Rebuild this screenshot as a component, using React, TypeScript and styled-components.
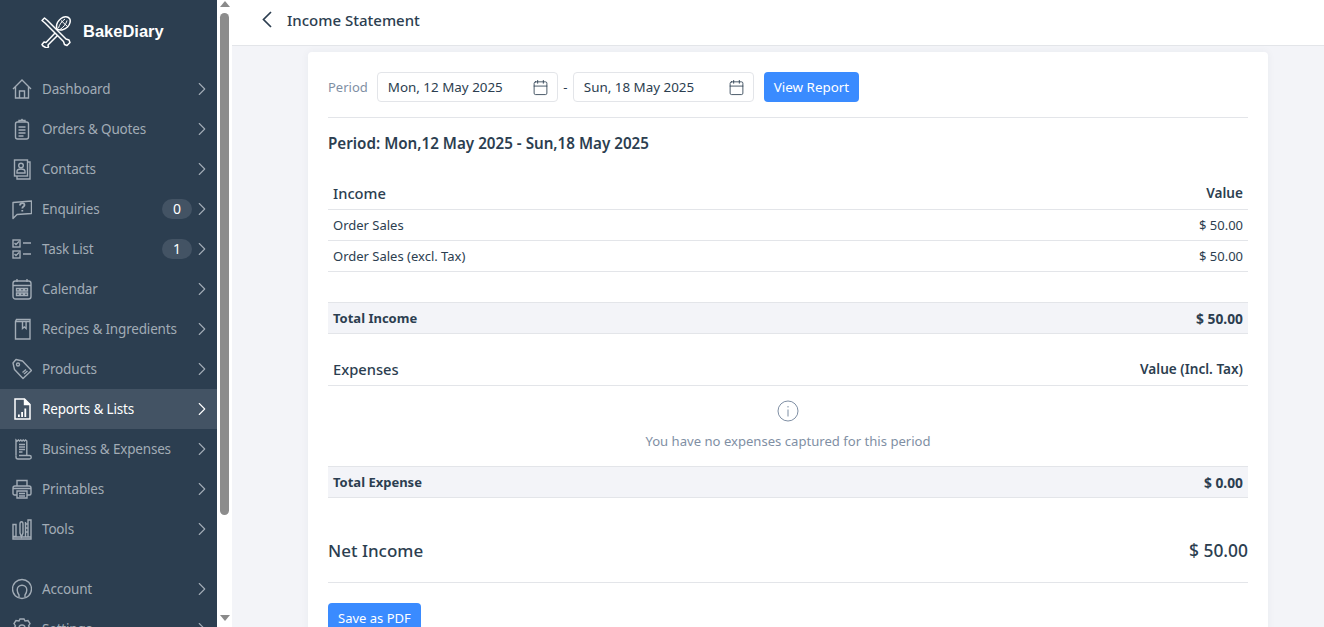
import React from 'react';
import styled, { createGlobalStyle } from 'styled-components';
import { ChevronRight, Calendar } from 'lucide-react';

const GlobalStyle = createGlobalStyle`
  html, body { margin: 0; padding: 0; height: 100%; overflow: hidden; }
  body { font-family: "Noto Sans", "Open Sans", sans-serif; color: #2c3e50; background: #f3f4f8; }
  * { box-sizing: border-box; }
`;

const Shell = styled.div`
  display: flex;
  width: 1324px;
  height: 627px;
  overflow: hidden;
`;

const Sidebar = styled.aside`
  width: 217px;
  height: 627px;
  flex: none;
  background: #2c3e50;
  overflow: hidden;
`;

const Brand = styled.div`
  height: 69px;
  display: flex;
  align-items: flex-start;
  padding: 16px 0 0 40px;
  gap: 11px;
`;

const BrandName = styled.span`
  font-family: "Liberation Sans", Arial, sans-serif;
  font-weight: 700;
  font-size: 16.5px;
  line-height: 31px;
  color: #fff;
`;

const NavList = styled.nav`
  display: flex;
  flex-direction: column;
`;

const NavItem = styled.div<{ $active?: boolean; $spaced?: boolean }>`
  height: 40px;
  flex: none;
  display: flex;
  align-items: center;
  padding: 0 4px 0 12px;
  margin-top: ${({ $spaced }) => ($spaced ? '20px' : '0')};
  background: ${({ $active }) => ($active ? '#435364' : 'transparent')};
  color: ${({ $active }) => ($active ? '#ffffff' : '#a2acb6')};
  font-size: 13.5px;
  letter-spacing: -0.18px;
`;

const NavIcon = styled.svg`
  width: 20px;
  height: 22px;
  flex: none;
  margin-right: 10px;
  fill: none;
  stroke: currentColor;
  stroke-width: 1.4;
`;

const NavLabel = styled.span`
  flex: 1;
  white-space: nowrap;
  padding-bottom: 1px;
`;

const Count = styled.span`
  width: 30px;
  height: 20px;
  border-radius: 10px;
  background: #435364;
  color: #fff;
  font-size: 14px;
  line-height: 20px;
  text-align: center;
  margin-right: -1px;
`;

const Scrollbar = styled.div`
  width: 15px;
  height: 627px;
  flex: none;
  background: #fff;
  display: flex;
  flex-direction: column;
  align-items: center;
`;

const ArrowUp = styled.div`
  flex: none;
  margin-top: 1px;
  width: 0;
  height: 0;
  border-left: 5px solid transparent;
  border-right: 5px solid transparent;
  border-bottom: 6px solid #8a8a8a;
`;

const ArrowDown = styled(ArrowUp)`
  margin-top: 100px;
  border-bottom: 0;
  border-top: 6px solid #8a8a8a;
`;

const Thumb = styled.div`
  flex: none;
  width: 9px;
  height: 502px;
  margin-top: 6px;
  border-radius: 5px;
  background: #8c8c8c;
`;

const Main = styled.main`
  flex: 1;
  min-width: 0;
  height: 627px;
  overflow: hidden;
`;

const TopBar = styled.header`
  height: 46px;
  background: #fff;
  border-bottom: 1px solid #e3e5e9;
  display: flex;
  align-items: center;
  padding: 0 0 6px 29px;
  gap: 14px;
  font-size: 15px;
  font-weight: 500;
  color: #2c3e50;
`;

const Card = styled.section`
  width: 960px;
  margin: 6px 0 0 76px;
  padding: 20px;
  background: #fff;
  border-radius: 4px 4px 0 0;
  box-shadow: 0 0 8px rgba(44, 62, 80, 0.05);
`;

const FilterRow = styled.div`
  display: flex;
  align-items: center;
  height: 30px;
  padding-bottom: 15px;
  border-bottom: 1px solid #e3e5e9;
  box-sizing: content-box;
`;

const PeriodLabel = styled.span`
  font-size: 13px;
  color: #7f8fa4;
  margin-right: 9px;
`;

const DateField = styled.div`
  width: 181px;
  height: 30px;
  border: 1px solid #e3e5e9;
  border-radius: 4px;
  display: flex;
  align-items: center;
  justify-content: space-between;
  padding: 0 8px 0 10px;
  font-size: 13.4px;
  color: #2c3e50;
`;

const DateDash = styled.span`
  width: 15px;
  text-align: center;
  font-size: 13px;
  color: #2c3e50;
`;

const PrimaryButton = styled.button`
  height: 30px;
  padding: 0 10px;
  border: 0;
  border-radius: 4px;
  background: #3a8bff;
  color: #fff;
  font-family: inherit;
  font-size: 13.4px;
`;

const ViewButton = styled(PrimaryButton)`
  margin-left: 10px;
`;

const PeriodHeading = styled.h2`
  margin: 15px 0 0;
  font-size: 15.2px;
  line-height: 20px;
  font-weight: 600;
  color: #2c3e50;
`;

const HeadRow = styled.div<{ $top: number }>`
  display: flex;
  justify-content: space-between;
  align-items: center;
  height: 32px;
  margin-top: ${({ $top }) => $top}px;
  padding: 0 5px 2px;
  border-bottom: 1px solid #e3e5e9;
`;

const HeadTitle = styled.span`
  font-size: 14.7px;
  font-weight: 500;
`;

const HeadValue = styled.span`
  font-size: 13.6px;
  font-weight: 600;
`;

const DataRow = styled.div`
  display: flex;
  justify-content: space-between;
  align-items: center;
  height: 31px;
  padding: 0 5px;
  border-bottom: 1px solid #e3e5e9;
  font-size: 13px;
`;

const TotalRow = styled.div<{ $top: number }>`
  display: flex;
  justify-content: space-between;
  align-items: center;
  height: 32px;
  margin-top: ${({ $top }) => $top}px;
  padding: 0 5px;
  background: #f3f4f8;
  border-top: 1px solid #e3e5e9;
  border-bottom: 1px solid #e3e5e9;
  font-size: 13px;
  font-weight: 700;
`;

const TotalAmount = styled.span`
  font-size: 13.8px;
`;

const Empty = styled.div`
  height: 80px;
  display: flex;
  flex-direction: column;
  align-items: center;
  padding-top: 14px;
  gap: 10px;
  color: #7f8fa4;
  font-size: 13.1px;
`;

const NetRow = styled.div`
  display: flex;
  justify-content: space-between;
  align-items: center;
  height: 85px;
  padding-top: 20px;
  border-bottom: 1px solid #e3e5e9;
  font-size: 17px;
  font-weight: 500;
`;

const NetAmount = styled.span`
  font-size: 17.4px;
`;

const SaveButton = styled(PrimaryButton)`
  display: block;
  margin-top: 20px;
  font-size: 13px;
`;

const icons: Record<string, React.ReactNode> = {
  home: <path d="M1 11 10 2l9 9M3.5 9v11h13V9M7.5 20v-7h5v7" />,
  clipboard: (
    <>
      <rect x="3.5" y="4" width="13" height="17" rx="2" />
      <path d="M7 4V2.5h2l1-1 1 1h2V4M6.5 9h7M6.5 12h7M6.5 15h7M6.5 18h5" />
    </>
  ),
  contact: (
    <>
      <rect x="2.5" y="2" width="13" height="16" />
      <path d="M15.5 4h2.5v17H5v-3" />
      <circle cx="9" cy="7.5" r="2.3" />
      <path d="M5 15v-1.5c0-1.5 1.5-2.5 4-2.5s4 1 4 2.5V15z" />
    </>
  ),
  enquiry: (
    <>
      <path d="M1 4.5 19.5 3v12.5L5 16.5l-4 4z" strokeLinejoin="round" />
      <path d="M8 7.5c0-3 4.500-3 4.500-.5 0 1.700-2.200 1.500-2.200 3.500M10.300 12v1.500" strokeWidth="1.800" />
    </>
  ),
  tasks: (
    <>
      <rect x="1" y="2" width="7" height="7" />
      <rect x="1" y="13" width="7" height="7" />
      <path d="M2.500 5l1.500 1.500L7 3.500M2.500 16l1.500 1.500L7 14.500M11 5h8M11 16h8" />
    </>
  ),
  calendar: (
    <>
      <rect x="1" y="3" width="18" height="18" rx="2.500" />
      <path d="M1 7.500h18M5 1v3M15 1v3" />
      <path d="M4.500 10.500h3v2.500h-3zM8.500 10.500h3v2.500h-3zM12.500 10.500h3v2.500h-3zM4.500 15h3v2.500h-3zM8.500 15h3v2.500h-3zM12.500 15h3v2.500h-3z" />
    </>
  ),
  book: (
    <>
      <path d="M3.500 21V3.500L4.500 1.500H18V21zM3.500 3.500H18" />
      <path d="M10.500 3.500v7l1.800-1.500 1.800 1.500v-7" />
    </>
  ),
  tag: (
    <>
      <path d="M1 5 4 1.500 10.500 3 19.500 12.500 11 20.500 2.500 11.500z" strokeLinejoin="round" />
      <circle cx="6" cy="6.500" r="1.500" />
      <path d="M10.500 14.500l3.500-3M12 16l3.500-3" />
    </>
  ),
  report: (
    <>
      <path d="M3 1h9.500L18 6.500V21H3z" strokeWidth="1.500" />
      <path d="M12.500 1v5.500H18" fill="currentColor" />
      <path d="M6 16.500h1.800V19H6zM9.200 14h1.800v5H9.200zM12.400 10.500h1.800V19h-1.800z" fill="currentColor" stroke="none" />
    </>
  ),
  expense: (
    <>
      <path d="M4 17.500V2l1.200 1 1.200-1 1.200 1 1.200-1 1.200 1 1.200-1 1.200 1 1.200-1 1.200 1V17.500" />
      <path d="M7 6.500h6M7 9h6M7 11.500h6M7 14h3.500M4 17.500v1.500a2 2 0 0 0 2 2h11.500a1.700 1.700 0 0 0 0-3.500H7" />
    </>
  ),
  printer: (
    <>
      <path d="M5 8V2.500h10V8M5 17H2.500A1.500 1.500 0 0 1 1 15.500V10a2 2 0 0 1 2-2h14a2 2 0 0 1 2 2v5.500a1.500 1.500 0 0 1-1.500 1.500H15" />
      <path d="M5 13h10v7H5zM7 15.500h6M7 18h6M1 10.500h18" />
    </>
  ),
  tools: (
    <>
      <path d="M1 6.500h3v12H1zM16 2h3v17h-3zM1 21h18v-2H1z" />
      <path d="M8 6v9l1.500 4 1.500-4V6M8 6c0-3 3-3 3 0M13.500 4v15M16 6h-2M16 10h-2M16 14h-2" />
    </>
  ),
  account: (
    <>
      <circle cx="10" cy="11" r="9.500" />
      <path d="M7 19.500V17c-1-1.500-1.800-3-1.800-5a4.800 4.800 0 0 1 9.600 0c0 2-.8 3.500-1.800 5v2.500" />
    </>
  ),
  settings: (
    <>
      <path d="M7 3 8 1h4l1 2 3-.5 2 3-1.500 2.500 2 3-2 3-3 0-1.500 2H8l-1.500-2-3 0-2-3 2-3L2 5.500l2-3z" />
      <circle cx="10" cy="10" r="3" />
    </>
  ),
};

type NavEntry = { icon: string; label: string; count?: number; active?: boolean; spaced?: boolean };

const navItems: NavEntry[] = [
  { icon: 'home', label: 'Dashboard' },
  { icon: 'clipboard', label: 'Orders & Quotes' },
  { icon: 'contact', label: 'Contacts' },
  { icon: 'enquiry', label: 'Enquiries', count: 0 },
  { icon: 'tasks', label: 'Task List', count: 1 },
  { icon: 'calendar', label: 'Calendar' },
  { icon: 'book', label: 'Recipes & Ingredients' },
  { icon: 'tag', label: 'Products' },
  { icon: 'report', label: 'Reports & Lists', active: true },
  { icon: 'expense', label: 'Business & Expenses' },
  { icon: 'printer', label: 'Printables' },
  { icon: 'tools', label: 'Tools' },
  { icon: 'account', label: 'Account', spaced: true },
  { icon: 'settings', label: 'Settings' },
];

const Logo = () => (
  <svg width="32" height="32" viewBox="0 0 32 32" fill="none" stroke="#fff" strokeWidth="1.500" strokeLinejoin="round">
    <path d="M3 30l-1-1.500 2-2.500 2 .5L16 16l2.500 2.500L8 29l.5 2-2 1z" fill="#2c3e50" />
    <path d="M2 4.500 4.500 2l3 2.500L26 23l3 1 1 2.500-3 3-2.500-1-1-3L5 7z" fill="#2c3e50" />
    <path d="M17 13c-1.500-4 1-8 4-10.500s7-2 8.500 0 .5 6-2 8.500-7 4-10.500 2z" fill="#2c3e50" />
    <path d="M18.500 12c1-3.500 3-6.500 6.500-9M20 13.500c3-2 6-5 7-9M21 4.500l7 6.500" strokeWidth="1" />
  </svg>
);

const BackArrow = () => (
  <svg width="12" height="17" viewBox="0 0 12 17" fill="none" stroke="#2c3e50" strokeWidth="1.700">
    <path d="M10 1 2.500 8.500 10 16" />
  </svg>
);

const App = () => (
  <Shell>
    <GlobalStyle />
    <Sidebar>
      <Brand>
        <Logo />
        <BrandName>BakeDiary</BrandName>
      </Brand>
      <NavList>
        {navItems.map((item) => (
          <NavItem key={item.label} $active={item.active} $spaced={item.spaced}>
            <NavIcon viewBox="0 0 20 22">{icons[item.icon]}</NavIcon>
            <NavLabel>{item.label}</NavLabel>
            {item.count !== undefined && <Count>{item.count}</Count>}
            <ChevronRight size={22} strokeWidth={1.2} />
          </NavItem>
        ))}
      </NavList>
    </Sidebar>
    <Scrollbar>
      <ArrowUp />
      <Thumb />
      <ArrowDown />
    </Scrollbar>
    <Main>
      <TopBar>
        <BackArrow />
        Income Statement
      </TopBar>
      <Card>
        <FilterRow>
          <PeriodLabel>Period</PeriodLabel>
          <DateField>
            Mon, 12 May 2025
            <Calendar size={17} strokeWidth={1.2} />
          </DateField>
          <DateDash>-</DateDash>
          <DateField>
            Sun, 18 May 2025
            <Calendar size={17} strokeWidth={1.2} />
          </DateField>
          <ViewButton>View Report</ViewButton>
        </FilterRow>
        <PeriodHeading>Period: Mon,12 May 2025 - Sun,18 May 2025</PeriodHeading>

        <HeadRow $top={25}>
          <HeadTitle>Income</HeadTitle>
          <HeadValue>Value</HeadValue>
        </HeadRow>
        <DataRow>
          <span>Order Sales</span>
          <span>$ 50.00</span>
        </DataRow>
        <DataRow>
          <span>Order Sales (excl. Tax)</span>
          <span>$ 50.00</span>
        </DataRow>
        <TotalRow $top={30}>
          <span>Total Income</span>
          <TotalAmount>$ 50.00</TotalAmount>
        </TotalRow>

        <HeadRow $top={20}>
          <HeadTitle>Expenses</HeadTitle>
          <HeadValue>Value (Incl. Tax)</HeadValue>
        </HeadRow>
        <Empty>
          <svg width="22" height="22" viewBox="0 0 22 22" fill="none" stroke="#7f8fa4" strokeWidth="1">
            <circle cx="11" cy="11" r="10" />
            <path d="M11 9.500v7M11 6v1.500" />
          </svg>
          You have no expenses captured for this period
        </Empty>
        <TotalRow $top={0}>
          <span>Total Expense</span>
          <TotalAmount>$ 0.00</TotalAmount>
        </TotalRow>

        <NetRow>
          <span>Net Income</span>
          <NetAmount>$ 50.00</NetAmount>
        </NetRow>
        <SaveButton>Save as PDF</SaveButton>
      </Card>
    </Main>
  </Shell>
);

export default App;
